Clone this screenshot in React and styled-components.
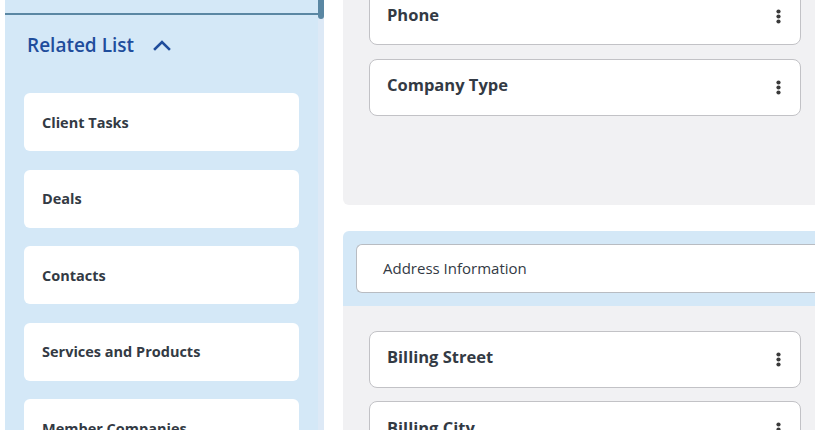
import styled, { createGlobalStyle } from "styled-components";

const GlobalStyle = createGlobalStyle`
  body {
    margin: 0;
    background: #ffffff;
    font-family: "Open Sans", "Noto Sans", sans-serif;
    overflow: hidden;
  }
`;

const relatedItems = [
  "Client Tasks",
  "Deals",
  "Contacts",
  "Services and Products",
  "Member Companies",
];

function Dots() {
  return (
    <svg width="5" height="15" viewBox="0 0 5 15">
      <circle cx="2.5" cy="2.5" r="2.1" fill="#3a3a3a" />
      <circle cx="2.5" cy="7.5" r="2.1" fill="#3a3a3a" />
      <circle cx="2.5" cy="12.5" r="2.1" fill="#3a3a3a" />
    </svg>
  );
}

function ChevronUp() {
  return (
    <svg width="18" height="12" viewBox="0 0 18 12">
      <path
        d="M2 10 L9 3 L16 10"
        fill="none"
        stroke="#1f4d9c"
        strokeWidth="2.6"
        strokeLinecap="square"
      />
    </svg>
  );
}

function FieldCard({ label }) {
  return (
    <Card>
      <CardLabel>{label}</CardLabel>
      <Dots />
    </Card>
  );
}

export default function App() {
  return (
    <>
      <GlobalStyle />
      <Page>
        <LeftCol>
          <Sidebar>
            <TopStub />
            <SideHeader>
              <SideTitle>Related List</SideTitle>
              <ChevronUp />
            </SideHeader>
            <SideList>
              {relatedItems.map((item) => (
                <SideCard key={item}>{item}</SideCard>
              ))}
            </SideList>
          </Sidebar>
          <Track>
            <Thumb />
          </Track>
        </LeftCol>

        <Main>
          <Panel>
            <CardStack>
              <FieldCard label="Phone" />
              <FieldCard label="Company Type" />
            </CardStack>
          </Panel>

          <Section>
            <SectionHead>
              <SectionBox>Address Information</SectionBox>
            </SectionHead>
            <SectionBody>
              <CardStack>
                <FieldCard label="Billing Street" />
                <FieldCard label="Billing City" />
              </CardStack>
            </SectionBody>
          </Section>
        </Main>
      </Page>
    </>
  );
}

const Page = styled.div`
  display: flex;
  align-items: flex-start;
  gap: 19px;
  height: 430px;
  padding-left: 5px;
  overflow: hidden;
`;

const LeftCol = styled.div`
  display: flex;
  flex: 0 0 319px;
  height: 430px;
`;

const Sidebar = styled.div`
  flex: 1;
  background: #d4e8f7;
  display: flex;
  flex-direction: column;
  overflow: hidden;
`;

const TopStub = styled.div`
  flex-shrink: 0;
  height: 13px;
  border-bottom: 2px solid #5a87a3;
`;

const SideHeader = styled.div`
  flex-shrink: 0;
  height: 60px;
  display: flex;
  align-items: center;
  gap: 19px;
  padding-left: 22px;
`;

const SideTitle = styled.span`
  font-size: 19px;
  font-weight: 600;
  color: #1f4d9c;
`;

const SideList = styled.div`
  flex-shrink: 0;
  display: flex;
  flex-direction: column;
  gap: 18.5px;
  padding: 18px 19px;
`;

const SideCard = styled.div`
  height: 58px;
  flex-shrink: 0;
  display: flex;
  align-items: center;
  padding-left: 18px;
  background: #ffffff;
  border-radius: 6px;
  font-size: 14.5px;
  font-weight: 700;
  color: #333a44;
`;

const Track = styled.div`
  width: 6px;
  background: #dde9f6;
`;

const Thumb = styled.div`
  height: 19px;
  background: #5a87a3;
  border-radius: 0 0 3px 3px;
`;

const Main = styled.div`
  flex: 0 0 488px;
  margin-top: -40px;
`;

const Panel = styled.div`
  background: #f1f1f3;
  padding: 28px 30px 89px 26px;
  border-radius: 6px;
`;

const CardStack = styled.div`
  display: flex;
  flex-direction: column;
  gap: 13.5px;
`;

const Card = styled.div`
  height: 57px;
  box-sizing: border-box;
  display: flex;
  align-items: center;
  justify-content: space-between;
  padding: 0 19px 0 17px;
  background: #ffffff;
  border: 1px solid #c2c2c6;
  border-radius: 8px;
`;

const CardLabel = styled.span`
  font-size: 16.5px;
  font-weight: 700;
  color: #333a44;
  margin-top: -5px;
`;

const Section = styled.div`
  margin-top: 26px;
  border-radius: 6px 0 0 0;
  overflow: hidden;
`;

const SectionHead = styled.div`
  background: #d4e8f7;
  padding: 13px 0 13px 13px;
`;

const SectionBox = styled.div`
  height: 49px;
  box-sizing: border-box;
  display: flex;
  align-items: center;
  padding-left: 26px;
  background: #ffffff;
  border: 1px solid #b8bcc2;
  border-right: none;
  border-radius: 6px 0 0 6px;
  font-size: 15px;
  color: #333a44;
`;

const SectionBody = styled.div`
  background: #f1f1f3;
  padding: 25px 30px 40px 26px;
`;
